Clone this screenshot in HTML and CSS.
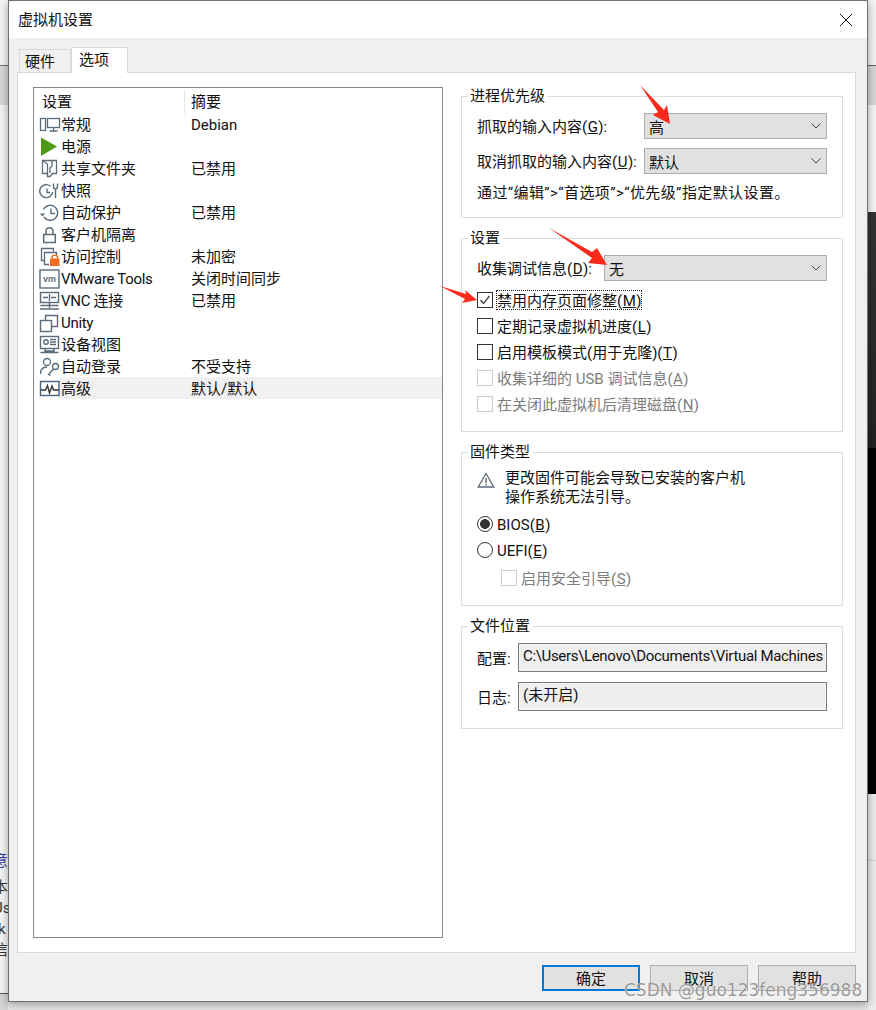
FILE: index.html
```html
<!DOCTYPE html>
<html lang="zh">
<head>
<meta charset="utf-8">
<title>虚拟机设置</title>
<link rel="stylesheet" href="styles.css">
</head>
<body>
<div class="desktop">
  <div class="bg-left">
    <div class="bl-a"></div><div class="bl-b"></div><div class="bl-c"></div>
    <div class="bl-d"></div>
    <div class="bl-text"><span class="blue">意</span><span>本</span><span>Us</span><span>rk</span><span>信</span></div>
    <div class="bl-e"></div>
  </div>
  <div class="bg-right">
    <div class="br-a"></div><div class="br-b"></div><div class="br-c"></div><div class="br-d"></div><div class="br-d2"></div><div class="br-e"></div><div class="br-f"></div>
  </div>

  <div class="dialog">
    <div class="titlebar">
      <span class="title">虚拟机设置</span>
      <svg class="close" viewBox="0 0 14 14"><path d="M1 1L13 13M13 1L1 13" stroke="#111" stroke-width="1" fill="none"/></svg>
    </div>
    <div class="body">
      <div class="tabs">
        <div class="tab">硬件</div>
        <div class="tab active">选项</div>
      </div>
      <div class="panel">
        <div class="list">
          <div class="list-head">
            <div class="col1">设置</div>
            <div class="col2">摘要</div>
          </div>
          <div class="row"><svg class="ic" viewBox="0 0 22 20"><g fill="none" stroke="#5b6b7a" stroke-width="1.3"><rect x="1.500" y="3.500" width="5" height="12"/><rect x="8.500" y="3.500" width="12" height="9"/><path d="M14.500 12.500v3M10.500 16h8"/></g></svg><span class="c1">常规</span><span class="c2">Debian</span></div>
          <div class="row"><svg class="ic" viewBox="0 0 22 20"><path d="M2 0.500L18 9.500L2 19Z" fill="#4e9a12"/></svg><span class="c1">电源</span></div>
          <div class="row"><svg class="ic" viewBox="0 0 22 20"><g fill="none" stroke="#5b6b7a" stroke-width="1.300"><path d="M3.500 1.500H17.500V14.500H13.500L11 17.500H8.500V14.500H3.500Z"/><path d="M8.500 16V5L3.500 1.500M13 1.500V7L11 9V14"/></g></svg><span class="c1">共享文件夹</span><span class="c2">已禁用</span></div>
          <div class="row"><svg class="ic" viewBox="0 0 22 20"><g fill="none" stroke="#5b6b7a" stroke-width="1.400"><path d="M11.500 5.200A6.500 6.500 0 1 0 13.700 11"/><path d="M8 7.500V11.500H11"/><path d="M16.500 9V17M14.500 2.500V5.500C14.500 7 15.500 8 16.500 8S18.500 7 18.500 5.500V2.500"/></g></svg><span class="c1">快照</span></div>
          <div class="row"><svg class="ic" viewBox="0 0 22 20"><g fill="none" stroke="#5b6b7a" stroke-width="1.400"><path d="M4.500 6.500A7.500 7.500 0 1 1 5 14"/><path d="M12 5.500V10.500H16"/><path d="M1 10.500H6L3.500 13.500Z" fill="#5b6b7a" stroke="none"/></g></svg><span class="c1">自动保护</span><span class="c2">已禁用</span></div>
          <div class="row"><svg class="ic" viewBox="0 0 22 20"><g fill="none" stroke="#5b6b7a" stroke-width="1.500"><rect x="4.700" y="9.500" width="11.600" height="8"/><path d="M7 9.500V6.500C7 4 8.500 2.700 10.500 2.700S14 4 14 6.500V9.500"/></g></svg><span class="c1">客户机隔离</span></div>
          <div class="row"><svg class="ic" viewBox="0 0 22 20"><g fill="none" stroke="#5b6b7a" stroke-width="1.300"><path d="M5.500 13.500H2.500V1.500H14.500V4.500"/><path d="M10 17.500H5.500V5.500H17.500V8"/></g><rect x="11" y="11.500" width="9.500" height="7.500" fill="#f06a22"/><path d="M13 11.500V10C13 7.500 18.500 7.500 18.500 10V11.500" fill="none" stroke="#f06a22" stroke-width="1.500"/></svg><span class="c1">访问控制</span><span class="c2">未加密</span></div>
          <div class="row"><svg class="ic" viewBox="0 0 22 20"><rect x="1" y="1" width="19" height="18" fill="none" stroke="#5b6b7a" stroke-width="1.400"/><text class="vm" x="10.500" y="13" text-anchor="middle">vm</text></svg><span class="c1 tight">VMware Tools</span><span class="c2">关闭时间同步</span></div>
          <div class="row"><svg class="ic" viewBox="0 0 22 20"><g fill="none" stroke="#5b6b7a" stroke-width="1.400"><rect x="1.500" y="1.500" width="18" height="10"/><path d="M10.500 11.500V17M1.500 14.500H19.500M1 18H20M10.500 3V10M4 6.500H9M12 6.500H17"/></g></svg><span class="c1 tight">VNC 连接</span><span class="c2">已禁用</span></div>
          <div class="row"><svg class="ic" viewBox="0 0 22 20"><g fill="none" stroke="#5b6b7a" stroke-width="1.400"><rect x="1.500" y="7.500" width="11" height="11"/><path d="M6.500 7.500V2.500H18.500V13.500H12.500"/></g></svg><span class="c1 tight">Unity</span></div>
          <div class="row"><svg class="ic" viewBox="0 0 22 20"><g fill="none" stroke="#5b6b7a" stroke-width="1.400"><rect x="1.500" y="1.500" width="18" height="12"/><circle cx="7" cy="7" r="2.200"/><path d="M11 4.500H17M11 7H17M11 9.500H17M6 13.500V16H15V13.500M1.500 17.500H19.500"/></g></svg><span class="c1">设备视图</span></div>
          <div class="row"><svg class="ic" viewBox="0 0 22 20"><g fill="none" stroke="#5b6b7a" stroke-width="1.300"><circle cx="8" cy="5" r="3.500"/><path d="M1.500 17C1.500 12 4 10 8 10"/><circle cx="16.500" cy="9.500" r="3"/><path d="M14.500 12L9.500 17.500L11.500 18.500"/></g></svg><span class="c1">自动登录</span><span class="c2">不受支持</span></div>
          <div class="row selected"><svg class="ic" viewBox="0 0 22 20"><g fill="none" stroke="#45637f" stroke-width="1.400"><rect x="1.500" y="2.500" width="18.500" height="14"/><path d="M1.500 11H6.500L8.500 6.500L10.500 14L13 7L14.500 11H20" stroke="#333"/></g></svg><span class="c1">高级</span><span class="c2">默认/默认</span></div>
        </div>

        <div class="side">
          <fieldset class="group g1">
            <legend>进程优先级</legend>
            <div class="form-row">
              <label class="lbl l1">抓取的输入内容(<u>G</u>):</label>
              <div class="select"><span>高</span><svg class="chev" viewBox="0 0 10 6"><path d="M0.500 0.500L5 5L9.500 0.500" fill="none" stroke="#444" stroke-width="1"/></svg></div>
            </div>
            <div class="form-row r2">
              <label class="lbl l1">取消抓取的输入内容(<u>U</u>):</label>
              <div class="select"><span>默认</span><svg class="chev" viewBox="0 0 10 6"><path d="M0.500 0.500L5 5L9.500 0.500" fill="none" stroke="#444" stroke-width="1"/></svg></div>
            </div>
            <p class="hint">通过“编辑”&gt;“首选项”&gt;“优先级”指定默认设置。</p>
          </fieldset>

          <fieldset class="group g2">
            <legend>设置</legend>
            <div class="form-row">
              <label class="lbl l2">收集调试信息(<u>D</u>):</label>
              <div class="select"><span>无</span><svg class="chev" viewBox="0 0 10 6"><path d="M0.500 0.500L5 5L9.500 0.500" fill="none" stroke="#444" stroke-width="1"/></svg></div>
            </div>
            <div class="checks">
              <div class="check"><span class="box"><svg viewBox="0 0 14 14"><path d="M2.500 7L5.500 10.500L11.500 3" fill="none" stroke="#444" stroke-width="1.300"/></svg></span><span class="focus">禁用内存页面修整(<u>M</u>)</span></div>
              <div class="check"><span class="box"></span><span>定期记录虚拟机进度(<u>L</u>)</span></div>
              <div class="check"><span class="box"></span><span>启用模板模式(用于克隆)(<u>T</u>)</span></div>
              <div class="check off"><span class="box"></span><span>收集详细的 USB 调试信息(<u>A</u>)</span></div>
              <div class="check off"><span class="box"></span><span>在关闭此虚拟机后清理磁盘(<u>N</u>)</span></div>
            </div>
          </fieldset>

          <fieldset class="group g3">
            <legend>固件类型</legend>
            <div class="warn">
              <svg class="warn-ic" viewBox="0 0 18 16"><path d="M9 1.500L16.800 15H1.200Z" fill="none" stroke="#5b6b7a" stroke-width="1.300"/><path d="M9 6V11M9 12V13.500" stroke="#444" stroke-width="1.200"/></svg>
              <p>更改固件可能会导致已安装的客户机<br>操作系统无法引导。</p>
            </div>
            <div class="radio on"><span class="dot"></span><span class="rt">BIOS(<u>B</u>)</span></div>
            <div class="radio"><span class="dot"></span><span class="rt">UEFI(<u>E</u>)</span></div>
            <div class="check off secure"><span class="box"></span><span>启用安全引导(<u>S</u>)</span></div>
          </fieldset>

          <fieldset class="group g4">
            <legend>文件位置</legend>
            <div class="file-row">
              <label class="lbl l3">配置:</label>
              <div class="field path">C:\Users\Lenovo\Documents\Virtual Machines</div>
            </div>
            <div class="file-row r2f">
              <label class="lbl l3">日志:</label>
              <div class="field">(未开启)</div>
            </div>
          </fieldset>
        </div>
      </div>
      <div class="footer">
        <div class="btn primary">确定</div>
        <div class="btn">取消</div>
        <div class="btn">帮助</div>
      </div>
    </div>
  </div>

  <svg class="arrows" viewBox="0 0 876 1010">
    <path d="M640 85L664 110L667 105L670 124L653 115L658 112Z" fill="#fa2a1c"/>
    <path d="M549 228L592 252L597 248L607 265L588 263L592 258Z" fill="#fa2a1c"/>
    <path d="M440 286L466 294L465 290L477 300L462 303L465 299Z" fill="#fa2a1c"/>
  </svg>
  <div class="watermark">CSDN @guo123feng356988</div>
</div>
</body>
</html>
```
FILE: styles.css
```css
* { box-sizing: border-box; }
html, body { margin: 0; padding: 0; }
body { width: 876px; height: 1010px; overflow: hidden; background: #e4e4e4; font-family: Roboto, "Noto Sans CJK SC", sans-serif; font-size: 15px; color: #111; }
.desktop { position: relative; width: 876px; height: 1010px; overflow: hidden; }
u { margin: 0 0.5px; }

.bg-left { position: absolute; left: 0; top: 0; width: 8px; height: 1010px; background: #f7f7f7; overflow: hidden; }
.bl-a { height: 65px; background: #f5f5f5; border-top: 20px solid #f5f5f5; }
.bl-b { height: 1px; background: #6e6e6e; }
.bl-c { height: 39px; background: #d8d8d8; }
.bl-d { height: 745px; background: #f4f4f4; border-top: 54px solid #f4f4f4; }
.bl-text { display: flex; flex-direction: column; height: 144px; margin-left: -7px; padding-top: 1px; line-height: 21px; color: #333; white-space: nowrap; background: #f6f6f6; border-bottom: 1px solid #555; }
.bl-text .blue { color: #3b3b9a; margin-bottom: 5px; }
.bl-e { height: 16px; background: #d4d4d4; }

.bg-right { position: absolute; left: 868px; top: 0; width: 8px; height: 1010px; background: #e6e6e6; }
.br-a { height: 65px; background: #f4f4f4; }
.br-b { height: 40px; background: #d6d6d6; border-top: 1px solid #666; }
.br-c { height: 107px; background: #f6f6f6; }
.br-d { height: 236px; background: linear-gradient(#333, #222); }
.br-d2 { height: 346px; background: #000; }
.br-e { height: 67px; background: #ececec; border-bottom: 1px solid #d2d2d2; }
.br-f { height: 149px; background: #ededed; }

.dialog { position: absolute; left: 8px; top: 0; width: 860px; height: 1002px; background: #f0f0f0; border: 1px solid #6f6f6f; box-shadow: 0 2px 9px rgba(0,0,0,.35); display: flex; flex-direction: column; }
.titlebar { height: 37px; background: #fff; display: flex; align-items: center; justify-content: space-between; padding: 0 14px 0 9px; flex: none; }
.title { line-height: 20px; }
.close { width: 14px; height: 14px; display: block; }

.body { flex: 1; display: flex; flex-direction: column; padding: 9px 11px 0 8px; min-height: 0; }
.tabs { display: flex; align-items: flex-end; height: 25px; padding-left: 2px; position: relative; z-index: 1; flex: none; }
.tab { width: 52px; height: 23px; background: #f0f0f0; border: 1px solid #d9d9d9; border-bottom: 0; padding-left: 5px; line-height: 24px; }
.tab.active { width: 57px; height: 26px; background: #fff; margin-bottom: -1px; padding-left: 7px; line-height: 24px; }

.panel { height: 881px; background: #fff; border: 1px solid #d9d9d9; display: flex; padding: 14px 12px 14px 15px; gap: 18px; flex: none; }
.list { width: 410px; height: 851px; border: 1px solid #828790; padding-top: 2px; flex: none; }
.list-head { display: flex; height: 23px; line-height: 25px; }
.col1 { width: 151px; padding-left: 8px; border-right: 1px solid #e5e5e5; height: 24px; }
.col2 { padding-left: 6px; }
.row { display: flex; align-items: center; height: 22px; line-height: 20px; padding: 2px 0 0 5px; white-space: nowrap; }
.row.selected { background: linear-gradient(#f0f0f0, #f0f0f0) no-repeat 25px 0 / 100% 100%; }
.ic { width: 22px; height: 20px; flex: none; display: block; }
.vm { font: bold 9px "Liberation Sans", sans-serif; fill: #5b6b7a; }
.c1 { width: 130px; flex: none; }
.c1.tight { letter-spacing: -0.3px; }

.side { width: 382px; flex: none; display: flex; flex-direction: column; }
.group { margin: 0; border: 1px solid #dcdcdc; padding: 0 15px; min-width: 0; }
.group legend { padding: 0 3px 0 2px; margin-left: -9px; line-height: 20px; }
.g1 { height: 132px; margin-top: -1px; }
.g2 { height: 204px; margin-top: 10px; }
.g3 { height: 164px; margin-top: 10px; }
.g4 { height: 113px; margin-top: 10px; }

.form-row { display: flex; align-items: center; }
.g1 .form-row { margin-top: 7px; }
.g1 .form-row.r2 { margin-top: 9px; }
.g2 .form-row { margin-top: 7px; }
.lbl { white-space: nowrap; flex: none; line-height: 20px; padding-top: 2px; }
.l1 { width: 167px; }
.l2 { width: 127px; }
.select { flex: 1; height: 26px; background: #e1e1e1; border: 1px solid #adadad; display: flex; align-items: center; justify-content: space-between; padding: 0 5px 0 4px; min-width: 0; }
.chev { width: 10px; height: 6px; display: block; flex: none; }
.hint { margin: 9px 0 0; line-height: 20px; white-space: nowrap; letter-spacing: 0.4px; }

.checks { margin-top: 11px; display: flex; flex-direction: column; gap: 10px; }
.check { display: flex; align-items: center; height: 16px; white-space: nowrap; }
.check > span:last-child { padding-top: 2px; line-height: 16px; }
.box { width: 16px; height: 16px; border: 1px solid #333; background: #fff; margin-right: 4px; flex: none; display: block; }
.box svg { display: block; width: 14px; height: 14px; }
.focus { outline: 1px dotted #222; }
.check.off { color: #7d7d7d; }
.check.off .box { border-color: #ccc; }

.warn { display: flex; margin-top: 7px; gap: 10px; }
.warn-ic { width: 18px; height: 16px; margin-top: 3px; flex: none; display: block; }
.warn p { margin: 0; line-height: 19px; white-space: nowrap; }
.radio { display: flex; align-items: center; height: 16px; margin-top: 10px; white-space: nowrap; }
.rt { padding-top: 2px; line-height: 16px; }
.warn + .radio { margin-top: 9px; }
.dot { width: 16px; height: 16px; border: 1px solid #333; border-radius: 50%; background: #fff; margin-right: 4px; flex: none; display: block; }
.radio.on .dot { background: radial-gradient(circle, #333 0 4.600px, #fff 5.200px); }
.check.secure { margin-top: 12px; padding-left: 24px; }

.file-row { display: flex; align-items: center; margin-top: 7px; }
.r2f { margin-top: 10px; }
.l3 { width: 41px; }
.field { flex: 1; height: 29px; min-width: 0; background: #efefef; border: 1px solid #7a7a7a; padding: 0 4px; line-height: 24px; overflow: hidden; white-space: nowrap; box-shadow: inset 0 0 0 1px #f4f4f4; }
.field.path { letter-spacing: -0.33px; }

.footer { display: flex; justify-content: flex-end; gap: 10px; padding: 12px 0 0; }
.btn { width: 98px; height: 26px; background: #e1e1e1; border: 1px solid #adadad; text-align: center; line-height: 26px; }
.btn.primary { border: 2px solid #0078d7; line-height: 24px; }

.arrows { position: absolute; left: 0; top: 0; width: 876px; height: 1010px; pointer-events: none; }
.watermark { position: absolute; left: 624px; top: 979px; font-family: "DejaVu Sans", sans-serif; font-size: 17px; line-height: 22px; color: rgba(120,120,120,.75); white-space: nowrap; text-shadow: 0 0 1px #fff; }
```
